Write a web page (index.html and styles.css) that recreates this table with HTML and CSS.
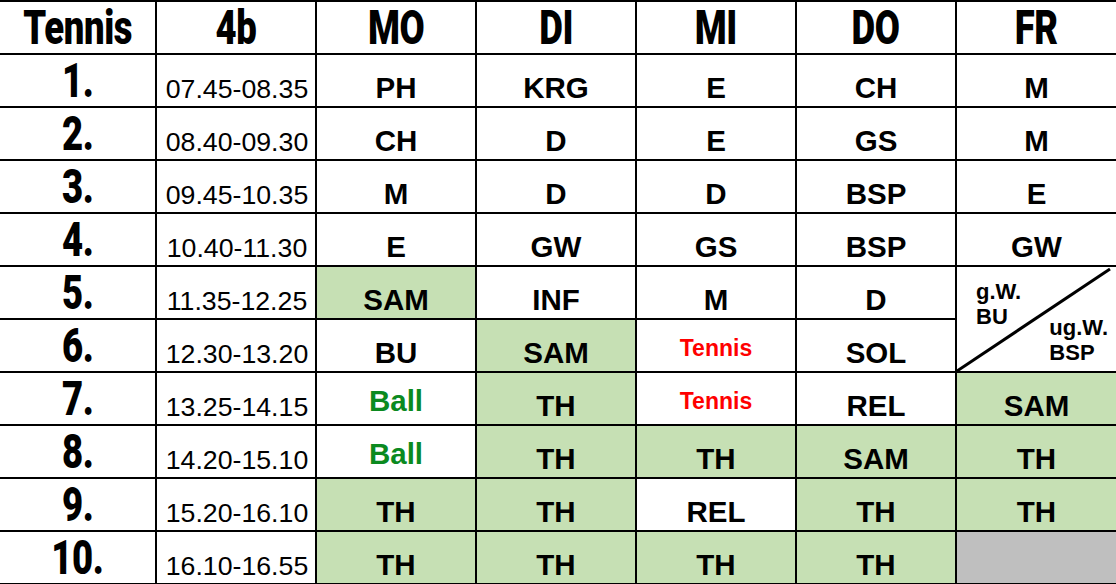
FILE: index.html
```html
<!DOCTYPE html>
<html lang="de">
<head>
<meta charset="utf-8">
<title>Stundenplan 4b</title>
<link rel="stylesheet" href="styles.css">
</head>
<body>
<div class="plan">
  <div class="cell head"><span class="imp">Tennis</span></div>
  <div class="cell head"><span class="imp">4b</span></div>
  <div class="cell head"><span class="imp">MO</span></div>
  <div class="cell head"><span class="imp">DI</span></div>
  <div class="cell head"><span class="imp">MI</span></div>
  <div class="cell head"><span class="imp">DO</span></div>
  <div class="cell head"><span class="imp">FR</span></div>

  <div class="cell num"><span class="imp">1.</span></div>
  <div class="cell time">07.45-08.35</div>
  <div class="cell subj">PH</div>
  <div class="cell subj">KRG</div>
  <div class="cell subj">E</div>
  <div class="cell subj">CH</div>
  <div class="cell subj">M</div>

  <div class="cell num"><span class="imp">2.</span></div>
  <div class="cell time">08.40-09.30</div>
  <div class="cell subj">CH</div>
  <div class="cell subj">D</div>
  <div class="cell subj">E</div>
  <div class="cell subj">GS</div>
  <div class="cell subj">M</div>

  <div class="cell num"><span class="imp">3.</span></div>
  <div class="cell time">09.45-10.35</div>
  <div class="cell subj">M</div>
  <div class="cell subj">D</div>
  <div class="cell subj">D</div>
  <div class="cell subj">BSP</div>
  <div class="cell subj">E</div>

  <div class="cell num"><span class="imp">4.</span></div>
  <div class="cell time">10.40-11.30</div>
  <div class="cell subj">E</div>
  <div class="cell subj">GW</div>
  <div class="cell subj">GS</div>
  <div class="cell subj">BSP</div>
  <div class="cell subj">GW</div>

  <div class="cell num"><span class="imp">5.</span></div>
  <div class="cell time">11.35-12.25</div>
  <div class="cell subj green">SAM</div>
  <div class="cell subj">INF</div>
  <div class="cell subj">M</div>
  <div class="cell subj">D</div>
  <div class="cell split">
    <svg class="diag" viewBox="0 0 159 104" preserveAspectRatio="none" aria-hidden="true">
      <line x1="0" y1="104" x2="153" y2="2" stroke="#000" stroke-width="3"/>
    </svg>
    <div class="split-top">g.W.<br>BU</div>
    <div class="split-bottom">ug.W.<br>BSP</div>
  </div>

  <div class="cell num"><span class="imp">6.</span></div>
  <div class="cell time">12.30-13.20</div>
  <div class="cell subj">BU</div>
  <div class="cell subj green">SAM</div>
  <div class="cell subj red">Tennis</div>
  <div class="cell subj">SOL</div>

  <div class="cell num"><span class="imp">7.</span></div>
  <div class="cell time">13.25-14.15</div>
  <div class="cell subj ball">Ball</div>
  <div class="cell subj green">TH</div>
  <div class="cell subj red">Tennis</div>
  <div class="cell subj">REL</div>
  <div class="cell subj green">SAM</div>

  <div class="cell num"><span class="imp">8.</span></div>
  <div class="cell time">14.20-15.10</div>
  <div class="cell subj ball">Ball</div>
  <div class="cell subj green">TH</div>
  <div class="cell subj green">TH</div>
  <div class="cell subj green">SAM</div>
  <div class="cell subj green">TH</div>

  <div class="cell num"><span class="imp">9.</span></div>
  <div class="cell time">15.20-16.10</div>
  <div class="cell subj green">TH</div>
  <div class="cell subj green">TH</div>
  <div class="cell subj">REL</div>
  <div class="cell subj green">TH</div>
  <div class="cell subj green">TH</div>

  <div class="cell num"><span class="imp">10.</span></div>
  <div class="cell time">16.10-16.55</div>
  <div class="cell subj green">TH</div>
  <div class="cell subj green">TH</div>
  <div class="cell subj green">TH</div>
  <div class="cell subj green">TH</div>
  <div class="cell gray"></div>
</div>
</body>
</html>
```

FILE: styles.css
```css
html, body {
  margin: 0;
  padding: 0;
  background: #fff;
}

body {
  width: 1116px;
  height: 584px;
  overflow: hidden;
  font-family: "Liberation Sans", Arial, sans-serif;
  color: #000;
}

.plan {
  display: grid;
  grid-template-columns: 155px repeat(5, 158px) 159px;
  grid-template-rows: repeat(11, 51px);
  gap: 2px;
  background: #000;
  border-top: 2px solid #000;
  border-bottom: 1px solid #000;
  width: 1116px;
}

.cell {
  background: #fff;
  display: flex;
  justify-content: center;
  align-items: flex-end;
}

.imp {
  display: inline-block;
  font-family: Impact, Roboto, "Liberation Sans", sans-serif;
  font-weight: 900;
  font-size: 48px;
  line-height: 46px;
  transform: scaleX(0.76);
  letter-spacing: -0.5px;
}

.head {
  align-items: center;
}

.num {
  padding-bottom: 2px;
}

.time {
  font-size: 26.7px;
  line-height: 1.15;
  padding-bottom: 1px;
  padding-left: 2px;
}

.subj {
  font-weight: bold;
  font-size: 29.5px;
  line-height: 1.15;
  padding-bottom: 1px;
}

.green {
  background: #c6e0b4;
}

.gray {
  background: #bfbfbf;
}

.red {
  color: #ff0000;
  font-size: 23px;
  padding-bottom: 10px;
}

.ball {
  color: #0b8a1f;
  padding-bottom: 6px;
}

.split {
  grid-row: span 2;
  position: relative;
  display: grid;
  grid-template-columns: 1fr;
  grid-template-rows: 1fr;
  font-weight: bold;
  font-size: 22px;
  line-height: 25px;
  padding: 12px 8px 6px 19px;
  overflow: hidden;
}

.diag {
  position: absolute;
  left: 0;
  top: 0;
  width: 100%;
  height: 100%;
}

.split-top {
  grid-area: 1 / 1;
  align-self: start;
  justify-self: start;
  position: relative;
}

.split-bottom {
  grid-area: 1 / 1;
  align-self: end;
  justify-self: end;
  position: relative;
}
```
